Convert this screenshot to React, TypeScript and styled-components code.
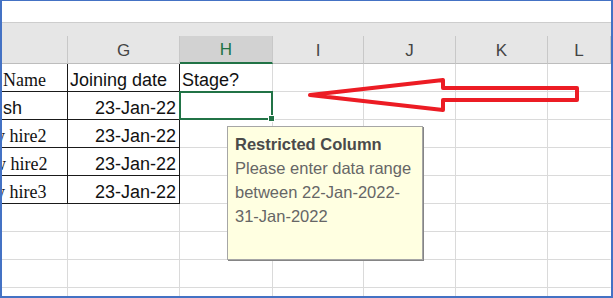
import React from "react";
import styled, { createGlobalStyle } from "styled-components";

const GlobalStyle = createGlobalStyle`
  html, body {
    margin: 0;
    padding: 0;
    background: #ffffff;
  }
`;

type Line = "grid" | "black" | "none";

const lineColor = (l: Line) =>
  l === "black" ? "#1a1a1a" : l === "grid" ? "#dadada" : "transparent";

const headers = ["", "G", "H", "I", "J", "K", "L"];

const rows = [
  { name: "Name", serif: true, shift: 1, date: "Joining date", stage: "Stage?" },
  { name: "sh", serif: false, shift: 1, date: "23-Jan-22", stage: "" },
  { name: "New hire2", serif: true, shift: -31, date: "23-Jan-22", stage: "" },
  { name: "new hire2", serif: true, shift: -26, date: "23-Jan-22", stage: "" },
  { name: "New hire3", serif: true, shift: -31, date: "23-Jan-22", stage: "" },
];

const emptyRows = 4;

export default function App() {
  return (
    <>
      <GlobalStyle />
      <Frame>
        <TopStrip />
        <HeaderBand />
        <Grid>
          {headers.map((h, i) => (
            <HeaderCell key={"h" + i} $active={h === "H"}>
              {h}
            </HeaderCell>
          ))}

          {rows.map((r, i) => (
            <React.Fragment key={"r" + i}>
              <Cell $right="black" $bottom="black">
                <Clip $shift={r.shift} $serif={r.serif}>
                  {r.name}
                </Clip>
              </Cell>
              <Cell
                $right="black"
                $bottom="black"
                $align={i === 0 ? "left" : "right"}
              >
                {r.date}
              </Cell>
              <Cell $right="grid" $bottom={i === 4 ? "grid" : "grid"} $selected={i === 1}>
                {r.stage}
              </Cell>
              <Cell $right="grid" $bottom="grid" />
              <Cell $right="grid" $bottom="grid" />
              <Cell $right="grid" $bottom="grid" />
              <Cell $right="none" $bottom="grid" />
            </React.Fragment>
          ))}

          {Array.from({ length: emptyRows }).map((_, i) => (
            <React.Fragment key={"e" + i}>
              {headers.map((_, j) => (
                <Cell
                  key={j}
                  $right={j === headers.length - 1 ? "none" : "grid"}
                  $bottom="grid"
                />
              ))}
            </React.Fragment>
          ))}
        </Grid>

        <Arrow width="285" height="40" viewBox="0 0 285 40">
          <polygon
            points="10,20 143,5 143,13 277,13 277,25 143,25 143,35"
            fill="none"
            stroke="#ec1c24"
            strokeWidth="4"
            strokeLinejoin="round"
          />
        </Arrow>

        <Tip>
          <TipTitle>Restricted Column</TipTitle>
          <TipText>Please enter data range between 22-Jan-2022- 31-Jan-2022</TipText>
        </Tip>
      </Frame>
    </>
  );
}

const Frame = styled.div`
  position: relative;
  width: 613px;
  height: 298px;
  box-sizing: border-box;
  border-style: solid;
  border-color: #4472c4;
  border-width: 1px 2px 2px 2px;
  overflow: hidden;
  background: #ffffff;
  display: flex;
  flex-direction: column;
`;

const TopStrip = styled.div`
  flex: none;
  height: 21px;
  border-bottom: 1px solid #cdcdcd;
  background: #ffffff;
`;

const HeaderBand = styled.div`
  flex: none;
  height: 13px;
  background: #e6e6e6;
`;

const Grid = styled.div`
  display: grid;
  grid-template-columns: 66px 112px 93px 91px 92px 92px 1fr;
  grid-auto-rows: 28px;
`;

const HeaderCell = styled.div<{ $active?: boolean }>`
  box-sizing: border-box;
  display: flex;
  align-items: center;
  justify-content: center;
  padding-top: 2px;
  background: ${(p) => (p.$active ? "#d2d2d2" : "#e6e6e6")};
  border-right: 1px solid #c8c8c8;
  border-bottom: ${(p) => (p.$active ? "2px solid #217346" : "1px solid #bdbdbd")};
  color: ${(p) => (p.$active ? "#217346" : "#444444")};
  font-family: "Liberation Sans", Arial, sans-serif;
  font-size: 17px;

  &:last-child {
    border-right: none;
  }
`;

const Cell = styled.div<{
  $right: Line;
  $bottom: Line;
  $align?: "left" | "right";
  $selected?: boolean;
}>`
  position: relative;
  box-sizing: border-box;
  display: flex;
  align-items: flex-end;
  justify-content: ${(p) => (p.$align === "right" ? "flex-end" : "flex-start")};
  padding: 0 3px 0 2px;
  overflow: ${(p) => (p.$selected ? "visible" : "hidden")};
  white-space: nowrap;
  border-right: 1px solid ${(p) => lineColor(p.$right)};
  border-bottom: 1px solid ${(p) => lineColor(p.$bottom)};
  font-family: "Liberation Sans", Arial, sans-serif;
  font-size: 18px;
  line-height: 22px;
  color: #111111;

  ${(p) =>
    p.$selected &&
    `
    &::after {
      content: "";
      position: absolute;
      top: -1px;
      left: -1px;
      right: -1px;
      bottom: -1px;
      border: 2px solid #217346;
    }
    &::before {
      content: "";
      position: absolute;
      right: -3px;
      bottom: -3px;
      width: 5px;
      height: 5px;
      background: #217346;
      border: 1px solid #ffffff;
      z-index: 2;
    }
  `}
`;

const Clip = styled.span<{ $shift: number; $serif: boolean }>`
  margin-left: ${(p) => p.$shift - 2}px;
  font-family: ${(p) =>
    p.$serif
      ? '"Liberation Serif", "Times New Roman", serif'
      : '"Liberation Sans", Arial, sans-serif'};
`;

const Arrow = styled.svg`
  position: absolute;
  left: 298px;
  top: 74px;
  overflow: visible;
`;

const Tip = styled.div`
  position: absolute;
  left: 225px;
  top: 125px;
  width: 196px;
  height: 134px;
  box-sizing: border-box;
  padding: 5px 8px 0 7px;
  background: #ffffe1;
  border: 1px solid #a6a6a6;
  box-shadow: 1px 1px 0 #858585;
  font-family: "Liberation Sans", Arial, sans-serif;
  font-size: 16.5px;
  line-height: 24px;
`;

const TipTitle = styled.div`
  font-weight: bold;
  color: #4a4a4a;
`;

const TipText = styled.div`
  color: #666666;
`;
